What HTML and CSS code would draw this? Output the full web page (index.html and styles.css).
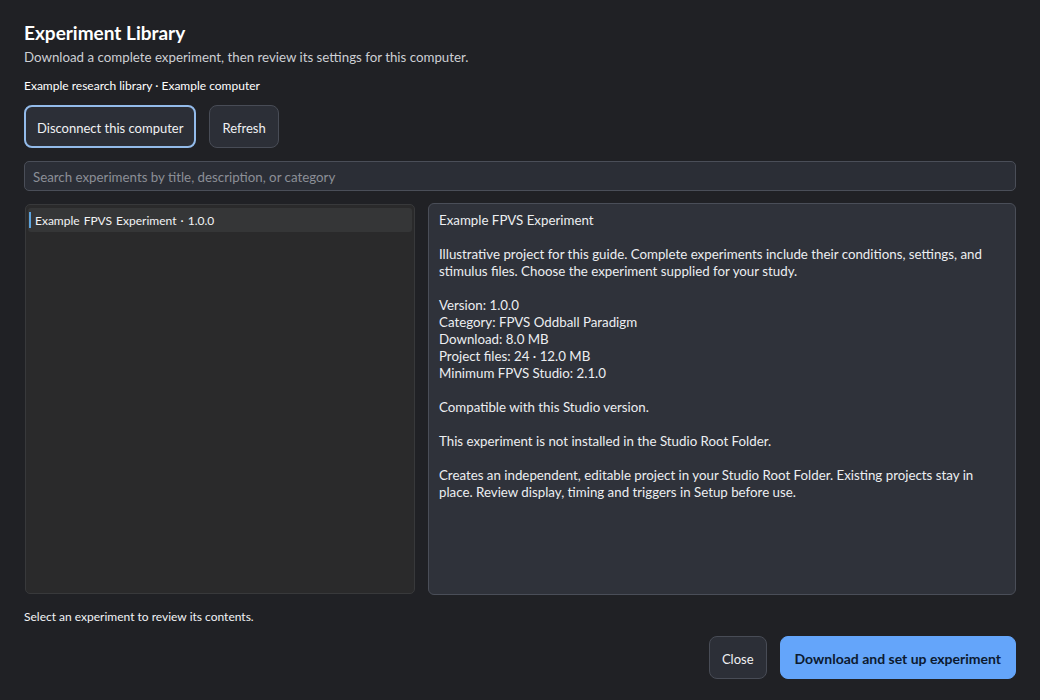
FILE: index.html
```html
<!DOCTYPE html>
<html>
<head>
  <meta charset="UTF-8">
  <title>Experiment Library</title>
  <link rel="stylesheet" href="styles.css">
</head>
<body>
  <h1>Experiment Library</h1>
  <p class="subtitle">Download a complete experiment, then review its settings for this computer.</p>
  <p class="meta">Example research library · Example computer</p>

  <div class="actions">
    <button class="btn btn-focus">Disconnect this computer</button>
    <button class="btn">Refresh</button>
  </div>

  <input class="search" type="text" placeholder="Search experiments by title, description, or category">

  <div class="panes">
    <div class="list">
      <div class="list-item selected">Example FPVS Experiment · 1.0.0</div>
    </div>
    <div class="details">Example FPVS Experiment

Illustrative project for this guide. Complete experiments include their conditions, settings, and stimulus files. Choose the experiment supplied for your study.

Version: 1.0.0
Category: FPVS Oddball Paradigm
Download: 8.0 MB
Project files: 24 · 12.0 MB
Minimum FPVS Studio: 2.1.0

Compatible with this Studio version.

This experiment is not installed in the Studio Root Folder.

Creates an independent, editable project in your Studio Root Folder. Existing projects stay in place. Review display, timing and triggers in Setup before use.</div>
  </div>

  <p class="status">Select an experiment to review its contents.</p>

  <div class="footer">
    <button class="btn btn-close">Close</button>
    <button class="btn btn-primary">Download and set up experiment</button>
  </div>
</body>
</html>
```

FILE: styles.css
```css
body {
  background: #202125;
  margin: 0;
  padding: 21px 24px 0 24px;
  font-family: 'Lato', 'Segoe UI', sans-serif;
  color: #f2f3f5;
  font-size: 13.3px;
}
h1 {
  font-size: 19px;
  line-height: 24px;
  margin: 0;
  font-weight: bold;
  color: #ffffff;
}
.subtitle {
  margin: 3px 0 0 0;
  line-height: 18px;
  color: #cdcfd4;
}
.meta {
  margin: 11px 0 0 0;
  font-size: 12px;
  line-height: 18px;
  color: #ffffff;
}
.actions {
  display: flex;
  gap: 13px;
  margin-top: 10px;
}
.btn {
  font-family: inherit;
  font-size: 13px;
  color: #f0f1f3;
  background: #2c2f37;
  border: 1px solid #484c56;
  border-radius: 8px;
  height: 43px;
  padding: 2px 12px 0 12px;
}
.btn-focus {
  border: 2px solid #93bbea;
  padding: 2px 11px 0 11px;
}
.search {
  display: block;
  box-sizing: border-box;
  width: 100%;
  height: 30px;
  margin-top: 13px;
  padding: 1px 8px 0 8px;
  background: #2b2e36;
  border: 1px solid #4a4e58;
  border-radius: 5px;
  font-family: inherit;
  font-size: 13.3px;
  color: #f0f1f3;
}
.search::placeholder {
  color: #8b8f97;
}
.panes {
  display: grid;
  grid-template-columns: 391px 1fr;
  gap: 13px;
  margin-top: 12px;
  height: 392px;
}
.list {
  background: #2a2a2b;
  border: 1px solid #38393b;
  border-radius: 5px;
  padding: 3px 2px;
  margin: 1px 0 1px 1px;
}
.list-item {
  font-size: 12px;
  line-height: 24px;
  padding: 1px 0 0 7px;
  height: 23px;
  border-radius: 3px;
  position: relative;
  word-spacing: 1px;
}
.list-item.selected {
  background: #353637;
}
.list-item.selected::before {
  content: "";
  position: absolute;
  left: 1px;
  top: 4px;
  width: 2px;
  height: 16px;
  background: #5da3dd;
}
.details {
  background: #2f323a;
  border: 1px solid #4a4e58;
  border-radius: 6px;
  padding: 8px 10px;
  line-height: 17px;
  white-space: pre-line;
  color: #eceef1;
}
.status {
  margin: 13px 0 0 0;
  font-size: 12px;
  line-height: 18px;
}
.footer {
  display: flex;
  justify-content: flex-end;
  gap: 13px;
  margin-top: 10px;
}
.btn-close {
  padding: 2px 12px 0 12px;
}
.btn-primary {
  background: #64a5fa;
  border-color: #64a5fa;
  color: #0c1a30;
  font-size: 14px;
  font-weight: bold;
  padding: 2px 14px 0 14px;
}
```
